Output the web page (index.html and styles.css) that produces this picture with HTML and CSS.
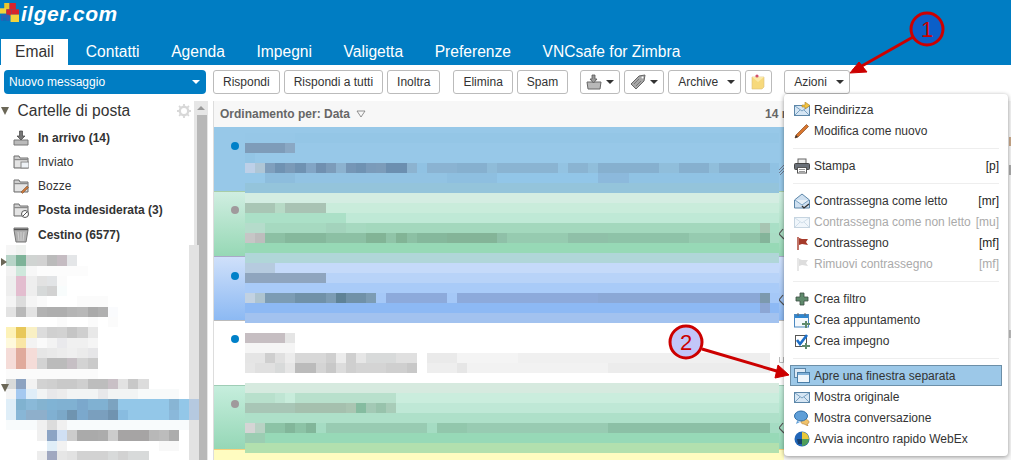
FILE: index.html
```html
<!DOCTYPE html>
<html lang="it">
<head>
  <meta charset="UTF-8">
  <title>Zimbra - ilger.com</title>
  <link rel="stylesheet" href="styles.css">
</head>
<body>
  <svg class="sprites" width="0" height="0">
    <symbol id="i-env" viewBox="0 0 16 16">
      <rect x="0.5" y="3.5" width="15" height="10" fill="#d6e6f4" stroke="#5c86a8"/>
      <path d="M1 4l7 5 7-5M1 13l5-5M15 13l-5-5" fill="none" stroke="#7ba2c2"/>
    </symbol>
    <symbol id="i-flag" viewBox="0 0 16 16">
      <path d="M4 2v13" stroke="currentColor" stroke-width="1.4" fill="none"/>
      <path d="M5 3l3 1 6 0-2 3 2 3-6-1-3 1z" fill="currentColor"/>
    </symbol>
    <symbol id="i-folder" viewBox="0 0 16 16">
      <path d="M1 2h5l1 2h8v10H1z" fill="#cfcfcf" stroke="#6e6e6e"/>
      <path d="M1 5.500h14" stroke="#8a8a8a"/>
      <path d="M2 7h12v6H2z" fill="#e4e4e4"/>
    </symbol>
    <symbol id="i-tag" viewBox="0 0 12 12">
      <path d="M5 1L1 6l5 5" fill="none" stroke="#555" stroke-width="1.2"/>
    </symbol>
  </svg>

  <div class="header">
    <div class="logo">
      <svg class="logo-mark" viewBox="0 0 18 18">
        <rect x="4" y="0" width="5" height="6" fill="#e9c62b"/>
        <rect x="9" y="0" width="6" height="6" fill="#d8242c"/>
        <rect x="0" y="5" width="6" height="5" fill="#f2d33c"/>
        <rect x="6" y="6" width="5" height="6" fill="#d8242c"/>
        <rect x="11" y="6" width="7" height="5" fill="#d8242c"/>
        <rect x="10" y="11" width="8" height="7" fill="#f2d33c"/>
        <rect x="1" y="11" width="8" height="6" fill="#2a62b4"/>
        <rect x="3" y="14" width="3" height="3" fill="#0a70b8"/>
      </svg>
      <span class="logo-text">ilger.com</span>
    </div>
    <div class="tabs">
      <a class="tab active">Email</a>
      <a class="tab">Contatti</a>
      <a class="tab">Agenda</a>
      <a class="tab">Impegni</a>
      <a class="tab">Valigetta</a>
      <a class="tab">Preferenze</a>
      <a class="tab">VNCsafe for Zimbra</a>
    </div>
  </div>

  <div class="toolbar">
    <button class="new-msg">Nuovo messaggio <span class="caret white"></span></button>
    <div class="actions">
      <button class="btn">Rispondi</button>
      <button class="btn">Rispondi a tutti</button>
      <button class="btn">Inoltra</button>
      <button class="btn gap-l">Elimina</button>
      <button class="btn">Spam</button>
      <button class="btn icon-btn tray">
        <svg class="ico" viewBox="0 0 16 16"><path d="M1 8h14l-1 7H2z" fill="#b8b8b8" stroke="#666"/><path d="M6 1h3v4h2L7.5 9 4 5h2z" fill="#999" stroke="#555" stroke-width="0.8"/></svg>
        <span class="caret"></span>
      </button>
      <button class="btn icon-btn">
        <svg class="ico" viewBox="0 0 16 16"><path d="M1 10l8-8 6-1-1 6-8 8z" fill="#a6a6a6" stroke="#666"/><path d="M4 10l5-5M6 12l5-5" stroke="#777"/><circle cx="12.5" cy="3.5" r="1" fill="#fff"/></svg>
        <span class="caret"></span>
      </button>
      <button class="btn">Archive <span class="caret spaced"></span></button>
      <button class="btn note-btn">
        <svg class="ico" viewBox="0 0 16 16"><path d="M2 3h12v10l-2 2H2z" fill="#f7d97c" stroke="#dcc07a" stroke-width="0.6"/><path d="M2 3l6 5 6-5" fill="#fbe9a8"/><circle cx="7" cy="2" r="1.6" fill="#d2506a"/></svg>
      </button>
      <button class="btn azioni">Azioni <span class="caret spaced"></span></button>
    </div>
  </div>

  <div class="main">
    <div class="sidebar">
      <div class="tree">
        <div class="tree-head">
          <span class="tri"></span>
          <span class="tree-title">Cartelle di posta</span>
          <svg class="gear" viewBox="0 0 14 14"><circle cx="7" cy="7" r="4.2" fill="none" stroke="#d8d8d8" stroke-width="2.4"/><path d="M7 0v14M0 7h14M2 2l10 10M12 2L2 12" stroke="#d8d8d8" stroke-width="1.8" stroke-dasharray="2.4 9.2"/></svg>
        </div>
        <div class="folder bold">
          <svg class="ico" viewBox="0 0 16 16"><path d="M1 10h14v5H1z" fill="#bbb" stroke="#777"/><path d="M6.500 1h3v5H12l-4 4-4-4h2.500z" fill="#777" stroke="#444" stroke-width="0.7"/></svg>
          In arrivo (14)
        </div>
        <div class="folder">
          <svg class="ico"><use href="#i-folder"/><rect x="8" y="8" width="8" height="6" fill="#eef2f6" stroke="#888"/></svg>
          Inviato
        </div>
        <div class="folder">
          <svg class="ico"><use href="#i-folder"/><path d="M8 14l6-6 1.500 1.500-6 6z" fill="#c9763a" stroke="#6e4a2c" stroke-width="0.5"/></svg>
          Bozze
        </div>
        <div class="folder bold">
          <svg class="ico"><use href="#i-folder"/><circle cx="12" cy="12" r="3.500" fill="#fff" stroke="#555"/><path d="M10 14l4-4" stroke="#555"/></svg>
          Posta indesiderata (3)
        </div>
        <div class="folder bold trash">
          <svg class="ico" viewBox="0 0 16 16"><path d="M1 1h14v2l-2 12H3L1 3z" fill="#b0b0b0" stroke="#777"/><path d="M1 2.500h14" stroke="#555" stroke-width="1.400"/><path d="M5 5l1 9M8 5v9M11 5l-1 9" stroke="#d0d0d0"/></svg>
          Cestino (6577)
        </div>
      </div>
      <div class="scrollbar">
        <div class="scroll-up"></div>
        <div class="scroll-thumb"></div>
      </div>
      <div class="side-blur" id="sideBlur"></div>
      <span class="tri small t1"></span>
      <span class="tri small t2"></span>
    </div>

    <div class="list">
      <div class="sort-bar">
        <span>Ordinamento per: Data <svg class="sort-ico" viewBox="0 0 10 8"><path d="M1 1h8L5 7z" fill="none" stroke="#777" stroke-width="0.8"/></svg></span>
        <span class="count">14 m</span>
      </div>
      <div class="msgs">
        <div class="msg blue"><span class="dot"></span><svg class="tag" viewBox="0 0 12 12"><path d="M1 6l5-5M1 9l6-6M2 11l5-5" fill="none" stroke="#667" stroke-width="0.8"/></svg></div>
        <div class="msg green"><span class="dot grey"></span><svg class="tag"><use href="#i-tag"/></svg></div>
        <div class="msg azure"><span class="dot"></span><svg class="tag"><use href="#i-tag"/></svg></div>
        <div class="msg plain"><span class="dot"></span><svg class="tag" viewBox="0 0 12 12"><path d="M1.500 0v5.500h4V0" fill="none" stroke="#bbb"/></svg></div>
        <div class="msg green alt"><span class="dot grey"></span><svg class="tag"><use href="#i-tag"/></svg></div>
        <div class="msg yellow"></div>
        <div class="msg-blur" id="msgBlur"></div>
      </div>
    </div>
    <div class="reading"></div>
  </div>

  <div class="menu">
    <div class="item">
      <svg class="ico"><use href="#i-env"/><path d="M8 3h3V0l5 3.500-5 3.500V5H8z" fill="#f2c23e" stroke="#a8802a" stroke-width="0.6"/></svg>
      <span>Reindirizza</span>
    </div>
    <div class="item">
      <svg class="ico" viewBox="0 0 16 16"><path d="M1 15l1-3L12.500 1.500l2 2L4 14z" fill="#d9772e" stroke="#8a4a22" stroke-width="0.7"/><path d="M1 15l1-3 2 2z" fill="#333"/></svg>
      <span>Modifica come nuovo</span>
    </div>
    <div class="sep"></div>
    <div class="item">
      <svg class="ico" viewBox="0 0 16 16"><rect x="4" y="1" width="8" height="5" fill="#eee" stroke="#666"/><rect x="0.500" y="5.500" width="15" height="6" rx="1" fill="#6a7078" stroke="#444"/><rect x="3.500" y="9.500" width="9" height="5.500" fill="#fff" stroke="#555"/><path d="M5 11.500h6M5 13.500h6" stroke="#999"/></svg>
      <span>Stampa</span><span class="key">[p]</span>
    </div>
    <div class="sep"></div>
    <div class="item">
      <svg class="ico" viewBox="0 0 16 16"><path d="M0.500 7L8 1l7.500 6v8H0.500z" fill="#cfe0f0" stroke="#5c86a8"/><path d="M1 7l7 5 7-5" fill="#e8f1f8" stroke="#7ba2c2"/><path d="M8 13l2 2 5-4" fill="none" stroke="#333" stroke-width="1.300"/></svg>
      <span>Contrassegna come letto</span><span class="key">[mr]</span>
    </div>
    <div class="item off">
      <svg class="ico faded"><use href="#i-env"/></svg>
      <span>Contrassegna come non letto</span><span class="key">[mu]</span>
    </div>
    <div class="item">
      <svg class="ico flag-red"><use href="#i-flag"/></svg>
      <span>Contrassegno</span><span class="key">[mf]</span>
    </div>
    <div class="item off">
      <svg class="ico flag-off"><use href="#i-flag"/></svg>
      <span>Rimuovi contrassegno</span><span class="key">[mf]</span>
    </div>
    <div class="sep"></div>
    <div class="item">
      <svg class="ico" viewBox="0 0 16 16"><path d="M6 2h4v4h4v4h-4v4H6v-4H2V6h4z" fill="#5f8a6c" stroke="#3d4f44" stroke-width="0.8"/></svg>
      <span>Crea filtro</span>
    </div>
    <div class="item">
      <svg class="ico" viewBox="0 0 16 16"><rect x="0.500" y="2.500" width="14" height="12.500" fill="#f4f8fc" stroke="#4a88c0"/><rect x="1" y="3" width="13" height="3" fill="#2f86cf"/><path d="M4 1v3M11 1v3" stroke="#666"/><path d="M11 9h2v2h3v2h-3v3h-2v-3H8v-2h3z" fill="#5f8a6c"/></svg>
      <span>Crea appuntamento</span>
    </div>
    <div class="item">
      <svg class="ico" viewBox="0 0 16 16"><rect x="1.500" y="2.500" width="11" height="11" fill="#fff" stroke="#555"/><path d="M3 7l3 4 7-9" fill="none" stroke="#1d6fc8" stroke-width="2.600"/><path d="M11 10h2v2h3v2h-3v2h-2v-2H8v-2h3z" fill="#5f8a6c"/></svg>
      <span>Crea impegno</span>
    </div>
    <div class="sep"></div>
    <div class="item selected">
      <svg class="ico" viewBox="0 0 16 16"><rect x="0.500" y="0.500" width="11" height="9" fill="#dce9f5" stroke="#5c86a8"/><rect x="3.500" y="4.500" width="12" height="10" fill="#eef5fb" stroke="#4a7ea8"/><rect x="4" y="5" width="11" height="2" fill="#7fb0d8"/></svg>
      <span>Apre una finestra separata</span>
    </div>
    <div class="item">
      <svg class="ico"><use href="#i-env"/></svg>
      <span>Mostra originale</span>
    </div>
    <div class="item">
      <svg class="ico" viewBox="0 0 16 16"><path d="M8 9c4 0 7 1 7 3 0 1-1 2-2 2l1 2-4-2c-2 0-3-1-3-2z" fill="#f0c26a" stroke="#b07a30" stroke-width="0.6"/><ellipse cx="7" cy="6" rx="6.500" ry="5" fill="#5f9fd8" stroke="#2f6ea8"/><path d="M3 11l-1 3 4-2z" fill="#5f9fd8"/></svg>
      <span>Mostra conversazione</span>
    </div>
    <div class="item">
      <svg class="ico" viewBox="0 0 16 16"><circle cx="8" cy="8" r="7.500" fill="#2166b8"/><path d="M8 1a7 7 0 0 1 7 7H8z" fill="#e8c83a"/><path d="M8 8h7a7 7 0 0 1-7 7z" fill="#4f9e5a"/><path d="M3 8h5v5H4z" fill="#17406e"/></svg>
      <span>Avvia incontro rapido WebEx</span>
    </div>
  </div>

  <svg class="marks" viewBox="0 0 1011 460">
    <path d="M913 37L853 71" stroke="#cc0000" stroke-width="3"/>
    <path d="M850 73L859 62 867 72z" fill="#cc0000" stroke="#cc0000"/>
    <circle cx="927" cy="29" r="16" fill="#0b5fc9" stroke="#cc0000" stroke-width="3"/>
    <text x="927" y="37" class="mark-text">1</text>
    <path d="M702 349L780 372" stroke="#cc0000" stroke-width="3"/>
    <path d="M789 375L775 378 778 365z" fill="#cc0000" stroke="#cc0000"/>
    <circle cx="686" cy="342" r="16" fill="#c2c6f8" stroke="#cc0000" stroke-width="3"/>
    <text x="686" y="350" class="mark-text">2</text>
  </svg>

  <script src="script.js"></script>
</body>
</html>
```

FILE: styles.css
```css
* {
  margin: 0;
  padding: 0;
  box-sizing: border-box;
}

html, body {
  height: 460px;
  overflow: hidden;
}

body {
  position: relative;
  font-family: "Liberation Sans", Arial, sans-serif;
  font-size: 12px;
  color: #333;
  background: #fff;
}

.sprites {
  position: absolute;
}

.ico {
  width: 16px;
  height: 16px;
  flex: none;
}

/* header */
.header {
  height: 65px;
  background: #007dc3;
  display: flex;
  flex-direction: column;
  justify-content: space-between;
}

.logo {
  display: flex;
  align-items: flex-start;
  gap: 2px;
  padding-top: 3px;
}

.logo-mark {
  width: 19px;
  height: 19px;
}

.logo-text {
  color: #fff;
  font-size: 21px;
  font-weight: bold;
  font-style: italic;
  line-height: 24px;
  letter-spacing: 0.5px;
  margin-top: -1px;
}

.tabs {
  display: flex;
  padding-left: 1px;
  height: 26px;
}

.tab {
  color: #fff;
  font-size: 15.6px;
  line-height: 26px;
  padding: 0 15.8px;
}

.tab.active {
  background: #fff;
  color: #333;
  padding: 0 14px;
  margin-right: 2px;
}

/* toolbar */
.toolbar {
  height: 36px;
  display: flex;
  padding: 5px 0 0 4px;
}

.new-msg {
  width: 202px;
  height: 24px;
  background: #007dc3;
  color: #fff;
  border: none;
  border-radius: 4px;
  font: 12px "Liberation Sans", Arial, sans-serif;
  text-align: left;
  padding: 0 6px 0 5px;
  display: flex;
  align-items: center;
  justify-content: space-between;
}

.actions {
  display: flex;
  gap: 4px;
  margin-left: 7px;
}

.btn {
  height: 24px;
  padding: 0 9px;
  background: #fff;
  border: 1px solid #bbb;
  border-radius: 3px;
  font: 12px "Liberation Sans", Arial, sans-serif;
  color: #333;
  display: flex;
  align-items: center;
}

.gap-l {
  margin-left: 9px;
}

.icon-btn {
  width: 40px;
  padding: 0 5px;
  justify-content: space-between;
}

.icon-btn.tray {
  margin-left: 8px;
}

.note-btn {
  width: 27px;
  padding: 0 4px;
}

.azioni {
  margin-left: 8px;
}

.caret {
  display: inline-block;
  width: 0;
  height: 0;
  border-left: 4px solid transparent;
  border-right: 4px solid transparent;
  border-top: 4px solid #333;
}

.caret.white {
  border-top-color: #fff;
}

.caret.spaced {
  margin-left: 9px;
  margin-right: -4px;
}

/* main panes */
.main {
  height: 359px;
  display: flex;
  overflow: hidden;
}

.sidebar {
  position: relative;
  width: 208px;
  display: flex;
  flex: none;
}

.tree {
  flex: 1;
}

.tree-head {
  display: flex;
  align-items: center;
  height: 20px;
  margin-bottom: 5px;
  padding-left: 1px;
}

.tree-title {
  font-size: 15.6px;
  margin-left: 8.500px;
}

.gear {
  width: 14px;
  height: 14px;
  margin-left: auto;
  margin-right: 3px;
}

.tri {
  display: inline-block;
  width: 0;
  height: 0;
  border-left: 4.5px solid transparent;
  border-right: 4.500px solid transparent;
  border-top: 8px solid #6b6757;
}

.tri.small {
  position: absolute;
}

.t1 {
  left: 1px;
  top: 157px;
  border: none;
  border-top: 4.500px solid transparent;
  border-bottom: 4.500px solid transparent;
  border-left: 6px solid #6b6757;
}

.t2 {
  left: 1px;
  top: 283px;
}

.folder {
  display: flex;
  align-items: center;
  gap: 9px;
  height: 24px;
  padding-left: 13px;
}

.folder.bold {
  font-weight: bold;
}

.folder.trash {
  margin-top: 1px;
}

.scrollbar {
  width: 14px;
  flex: none;
  background: #e6e6e6;
  display: flex;
  flex-direction: column;
  align-items: flex-end;
}

.scroll-up {
  width: 100%;
  height: 14px;
  position: relative;
}

.scroll-up::after {
  content: "";
  position: absolute;
  left: 3px;
  top: 5px;
  border-left: 4px solid transparent;
  border-right: 4px solid transparent;
  border-bottom: 4px solid #999;
}

.scroll-thumb {
  width: 10px;
  flex: 1;
  background: #b8b8b8;
  margin-right: 1px;
}

.side-blur {
  position: absolute;
  left: 6px;
  top: 144px;
  width: 193px;
}

.side-row {
  display: flex;
  height: 10.3px;
}

.side-row i {
  width: 10.2px;
  flex: none;
}

.side-row .track {
  width: 10px;
  margin-left: auto;
}

/* message list */
.list {
  width: 571px;
  flex: none;
  margin-left: 5px;
  border-left: 1px solid #ddd;
  display: flex;
  flex-direction: column;
}

.sort-bar {
  height: 26px;
  flex: none;
  background: #f7f7f7;
  color: #666;
  font-weight: bold;
  display: flex;
  align-items: center;
  justify-content: space-between;
  padding: 0 0 0 6px;
  white-space: nowrap;
}

.count {
  width: 19px;
  overflow: hidden;
}

.sort-ico {
  width: 10px;
  height: 8px;
  margin-left: 3px;
}

.msgs {
  position: relative;
  flex: 1;
}

.msg {
  display: flex;
  padding: 14px 0 0 17px;
  height: 64px;
  border-top: 1px solid transparent;
}

.msg:nth-child(even) {
  height: 65px;
}

.blue {
  background: #97c8e8;
  border-top-color: #97c8e8;
}

.green {
  background: linear-gradient(#d0eee1, #96d8b5);
  border-top-color: #a8cda8;
}

.azure {
  background: linear-gradient(#cfe0fa, #8cb9f3);
  border-top-color: #a9a9c8;
  padding-top: 15px;
}

.plain {
  background: #fff;
  border-top-color: #bbb;
}

.green.alt {
  background: linear-gradient(#c6eedd, #95d7b6);
  border-top-color: #9fcdb6;
}

.yellow {
  background: #fffcc0;
  border-top-color: #f8cf7a;
}

.dot {
  width: 8px;
  height: 8px;
  border-radius: 50%;
  background: #0080c8;
  flex: none;
}

.dot.grey {
  background: #a09a9c;
}

.tag {
  width: 12px;
  height: 12px;
  margin: 22px -6px 0 auto;
}

.msg-blur {
  position: absolute;
  left: 31px;
  top: 6px;
  width: 534px;
  overflow: hidden;
}

.blur-row {
  display: flex;
  height: 10px;
}

.blur-row i {
  width: 10.1px;
  flex: none;
}

.reading {
  flex: 1;
  background-color: #f6f6f6;
  background-image:
    linear-gradient(#c9a88a, #c9a88a),
    linear-gradient(#aaaaaa, #aaaaaa),
    linear-gradient(#bbbbbb, #bbbbbb);
  background-repeat: no-repeat;
  background-size: 2px 9px, 2px 10px, 2px 8px;
  background-position: right 36px, right 64px, right 229px;
}

/* actions menu */
.menu {
  position: absolute;
  left: 784px;
  top: 94px;
  width: 224px;
  height: 362px;
  padding: 5px 6px 0;
  background: #fff;
  border-radius: 4px;
  box-shadow: 0 1px 4px rgba(0, 0, 0, 0.4);
}

.item {
  height: 21px;
  display: flex;
  align-items: center;
  padding: 0 3px 0 4px;
  gap: 4px;
  white-space: nowrap;
}

.item .key {
  margin-left: auto;
  color: #222;
}

.item.off {
  color: #aaa;
}

.item.off .key {
  color: #aaa;
}

.item.selected {
  background: #9cc8e8;
  outline: 1px solid #6c8fa8;
  outline-offset: -1px;
}

.sep {
  height: 1px;
  margin: 7px 3px 6px;
  background: #eee;
}

.faded {
  opacity: 0.35;
}

.flag-red {
  color: #a53a2a;
}

.flag-off {
  color: #ddd;
}

/* numbered annotations */
.marks {
  position: absolute;
  left: 0;
  top: 0;
  width: 1011px;
  height: 460px;
}

.mark-text {
  font-size: 22px;
  fill: #cc0000;
  text-anchor: middle;
}
```

FILE: script.js
```js
// pixelated (censored) parts of the screenshot, one 10px cell per colour
// "abc*4" repeats a colour, "-" leaves the cell empty
function expand(spec) {
  const out = [];
  spec.split(' ').forEach(part => {
    if (!part) return;
    const bits = part.split('*');
    const n = bits[1] ? parseInt(bits[1]) : 1;
    for (let i = 0; i < n; i++) out.push(bits[0]);
  });
  return out;
}

function fillCells(row, spec) {
  expand(spec).forEach(color => {
    const cell = document.createElement('i');
    if (color !== '-') cell.style.background = '#' + color;
    row.appendChild(cell);
  });
}

const msgRows = [
  ['94c6e6', '96c7e7*5'],
  ['97c8e8', '7e9cb9*4 8aa8c4'],
  ['97c8e8', '93c5e5'],
  ['90c2e3', 'bdd0e8 afc6d6 7f9fbd 6f92b2 7a9ab8 6f92b2 82a5c5 7090b0 7c9cba 8cb2cf 7596b6 6f92b2 7a9bba 7c9cba 6c8fb0*2 8cb3d0 - 8ab3d2*3 86b0cf*3 8fbcd9 8ab4d2*6 93c3e2 8ab4d2*2 90bedb 86b0cf*6 90bedb*2 86b0cf*3 90bedb 86b0cf*3 8ab4d2*2'],
  ['90c3e4', '96c8e8*2 8dbddd*3 92c3e3*15 8ebfe0*5 92c6e8*10 8cb9dc*3'],
  ['94c4db', ''],
  ['d4ede2', ''],
  ['c9ecdb', 'a9c6b5*3 b7dac6 a9c3b4*4'],
  ['bfe9d6', 'abe0c7*10'],
  ['a9dfc6', 'b5dccb*2 a6d9c0*6 a3d3bc*2 a6d9c0*2 a3d8bd*39 a7c5b2'],
  ['a9dcc4', 'c6c6c6 bdbdbd 8cc0a4*2 85b89c*4 8cc0a4*4 82b496*2 90c4a8 82b496 8cc0a4 85b89c*3 84b498*5 8fc0a8 96cbb0*6 8fc0a8*4 8ec3a8*8 96cbb0*4 90c3a8*3 84b49a'],
  ['97d9b6', ''],
  ['b0d6d8', ''],
  ['c5daf9', 'b6cbdf*3'],
  ['b8d3f8', '8fa5be*8'],
  ['a9cbf8', ''],
  ['a5c8f7', 'c2d2e2 aec4d0 7c9cb4*3 7091a8*3 7c9cb4 5f8296 7091a8*2 7c9cb4 - 8daadb*6 - 8daadb*14 8ba8d6*16 7c99ae'],
  ['8db9f4', '8db9f4*51 8ca6d4'],
  ['a2c2ef', ''],
  ['ffffff', ''],
  ['ffffff', 'c6bec2*4 e5e5e5'],
  ['ffffff', 'f5f5f5*5'],
  ['ffffff', 'e5e5e5*2 cfcfcf e0e0e0 ececec d8d8d8*3 cfcfcf ececec cfcfcf e6e6e6 d8dada*3 e0e0e0*2 - eaeaea*3 f4f4f4*6 f0f0f0*22 eeeeee*3'],
  ['ffffff', 'e6e6e6 e0e0e0*2 d8dada e6e6e6 bbbbbb*2 d4d4d4 c8c8c8 dcdcdc cfcfcf d4d4d4*3 cfcfcf*2 c8c8c8 - eeeeee*3 e6e6e6 f2f2f2*14 ececec*16'],
  ['ffffff', ''],
  ['d6eadf', ''],
  ['caeddd', 'b8e0cc*3 bfe5d3 c8ecdb b8e0cc*10'],
  ['bfe8d6', 'a8c6b6*5 a5c0ae*5 aac5b2 85bca0 a3c9b5 98c3ac a8ccb8'],
  ['aee0c9', ''],
  ['a5dcc3', 'd5d5d5 b8d2c4 8cc3a6*2 82b69a 8cc3a6 82b69a - 98cbb2*10 - 92c7ac*3 98cbb2*14 8cc0a6*16'],
  ['97d9b7', '9bcdb2*2'],
  ['b2e0ae', '']
];

const msgBlur = document.getElementById('msgBlur');
msgRows.forEach(data => {
  const row = document.createElement('div');
  row.className = 'blur-row';
  row.style.background = '#' + data[0];
  fillCells(row, data[1]);
  msgBlur.appendChild(row);
});

const sideRows = [
  ['f6f6f6 f0f2f0', 'e2e2e2'],
  ['b8d4c8 7db398 d0d4d2 d2d2d2 bbbbbb c5bcc2 e4e6e8', 'e2e2e2'],
  ['f2f2f2 cfe8dc f7f7f7 fcfcfc*5', 'e2e2e2'],
  ['eeeeee e3bdcf eeeeee e2e2e2 e2e4e6 fbfbfb', 'e2e2e2'],
  ['eeeeee e3bdcf eeeeee d6d9d9 d2d2d2 f8fcfc', 'e2e2e2'],
  ['f4f4f4 dcdcdc f5f5f5 fafafa - - - fbfbfb*3', 'e2e2e2'],
  ['e3e3e3 b8b8b8 e3e3e3 b2b2b2 aeaeae aeaeae b5b5b5 b8b8b8 aaaaaa b0b0b0 fafbfd', 'e2e2e2'],
  ['- - - - - fbfbfb - - fbfbfb - fbfbfb', 'e2e2e2'],
  ['fdf2b8 e8c85a f9f0c4 dcdcdc d0d0d0 d2d2d2 c5c5c5 cfcfcf e8e8e8', 'e2e2e2'],
  ['fef9dc f9e6a6 f3f3f3 fafafa f3f3f3 e9e9ec f0f0f0 f0f0f0 f5f5f5', 'e2e2e2'],
  ['f5dcd8 e0aa9c f5dcd8 e6e6e6 e9e9e9 ececec efefef ebebeb e6e6e8', 'e2e2e2'],
  ['f5dcd8 e0aa9c f5dcd8 d3d3d3 bbbbbb bbbbbb c6bfc4 d3d3d3 cacaca', 'e2e2e2'],
  ['fbfbfb*9', 'e2e2e2'],
  ['d8dada 8ca2c0 f2f2f2 d2d2d2 cfcfcf c9c9c9 c9c9c9 cfcfcf bdbdbd bdbdbd c9c0c6 e2e2e2 c8c8c8 dcdcdc', 'e2e2e2'],
  ['f4f4f4 a5c9f0 e0eef8 f2f4f4 e8e8ea ececec f2f4f4*3 e8e8ea f2f4f4*3 f8fafa*4', 'e2e2e2'],
  ['dfeef8 80b2d0 8ab9d8 84b3d0 80b3d4 80b1d2 80b1d2 7ba8cc 80b1d2 80b1d2 7ca3c0 93c7e8*5 88b5d4 93c7e8', 'b5c9e0'],
  ['dfeef8 88b6d6 8eafcb 8eafcb 80b0d2 7ba8c8 6f94b0 7ba8cc 7a9fbe 7a9fbe 7093b0 88bce0 93c7e8*4 8ab8da 93c7e8', 'b5c9e0'],
  ['f8fbfc*3 f0f0f0 dcdcdc f0f0f0 f8fbfc*12', 'e2e2e2'],
  ['- - - f0f0f0 8ca4c4 d0e0f4 cccccc aaaaaa*2 acacac cccccc a6a4a4*3 b8b8b8 bcbcbc acacac', 'e2e2e2'],
  ['- - - - e0eef8 f2f2f2 - - - - - - - - - f8f8f8*2', 'e2e2e2'],
  ['- - - ededed a0a8c0 e6e6e6 e2e2e2 d2d2d2*3 d8dada d2d2d2 d8dada*2', 'e2e2e2']
];

const sideBlur = document.getElementById('sideBlur');
sideRows.forEach(data => {
  const row = document.createElement('div');
  row.className = 'side-row';
  fillCells(row, data[0]);
  const track = document.createElement('i');
  track.className = 'track';
  track.style.background = '#' + data[1];
  row.appendChild(track);
  sideBlur.appendChild(row);
});
```
